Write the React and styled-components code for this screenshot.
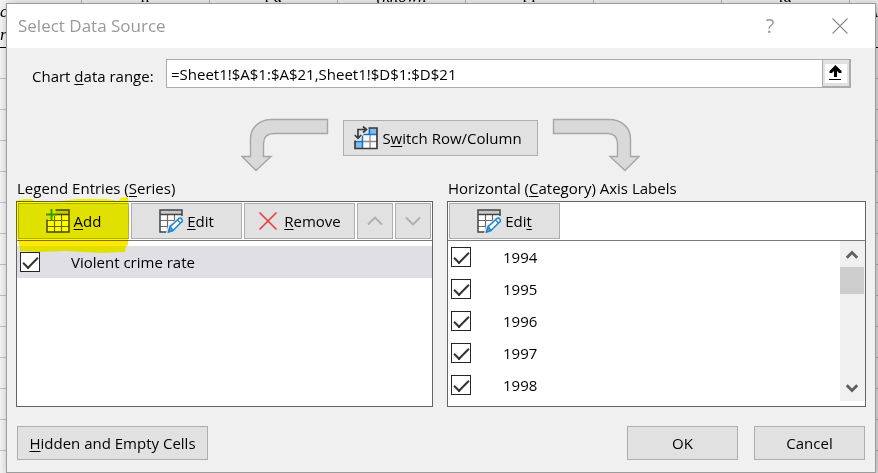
import React, { useState } from "react";
import styled, { createGlobalStyle } from "styled-components";

const GlobalStyle = createGlobalStyle`
  * { box-sizing: border-box; }
  body {
    margin: 0;
    background: #fff;
    color: #000;
    font-family: "Open Sans", "Noto Sans", sans-serif;
    font-size: 15px;
    line-height: 22px;
  }
  button, input { font: inherit; color: inherit; margin: 0; }
  u { text-underline-offset: 2px; text-decoration-thickness: 1px; }
`;

const Page = styled.div`
  position: relative;
  overflow: hidden;
  padding: 3px 2px 0 6px;
`;

/* Worksheet that shows round the edges of the dialog */
const Sheet = styled.div`
  position: absolute;
  inset: 0;
  overflow: hidden;
  background: repeating-linear-gradient(to bottom, transparent 0 30px, #c4c4c4 30px 31px) 0 48px no-repeat, #f7f7f7;
  font: italic 17px/24px "Liberation Serif", serif;
`;

const SheetHeader = styled.div`
  display: grid;
  grid-template-columns: 82px repeat(6, 128px) 29px;
  height: 48px;
  border-bottom: 1px solid #000;
  overflow: hidden;
`;

const SheetCell = styled.div`
  border-right: 1px solid #b9b9b9;
  text-align: ${(p) => p.$align || "center"};
  line-height: ${(p) => (p.$cut ? "24px" : "23px")};
  margin-top: ${(p) => (p.$cut ? "-15px" : "0")};
  white-space: pre-line;
`;

const Dialog = styled.section`
  position: relative;
  border: 1px solid #9c9c9c;
  background: #f0f0f0;
  box-shadow: 3px 2px 10px 2px rgba(0, 0, 0, 0.28);
`;

const TitleBar = styled.header`
  display: flex;
  align-items: center;
  height: 44px;
  padding: 0 18px 0 11px;
  background: #fff;
  color: #999;
`;

const Title = styled.h1`
  flex: 1;
  margin: 0;
  font-size: 17px;
  line-height: 24px;
  font-weight: 400;
`;

const TitleButton = styled.button`
  display: grid;
  place-items: center;
  width: 34px;
  height: 30px;
  margin-left: ${(p) => (p.$apart ? "36px" : "0")};
  padding: 0;
  border: 0;
  background: none;
  font-size: 20px;
`;

const Body = styled.div`
  padding: 11px 9px 12px;
`;

const RangeRow = styled.div`
  display: flex;
  align-items: center;
  padding: 0 15px 0 16px;
`;

const RangeLabel = styled.label`
  width: 134px;
  padding-top: 4px;
  white-space: nowrap;
`;

const RangeInput = styled.input`
  flex: 1;
  min-width: 0;
  height: 29px;
  padding: 0 4px;
  border: 1px solid #ababab;
  border-right: 0;
  border-radius: 0;
  background: #fff;
  outline: none;
`;

const CollapseButton = styled.button`
  display: grid;
  place-items: center;
  width: 29px;
  height: 29px;
  padding: 0;
  border: solid #ababab;
  border-width: 1px 2px 2px 1px;
  background: #e1e1e1;

  svg { background: #fff; }
`;

const SwitchRow = styled.div`
  display: flex;
  justify-content: center;
  align-items: flex-start;
  gap: 14px;
  margin-top: 30px;
  padding-right: 2px;
`;

const Button = styled.button`
  display: flex;
  align-items: center;
  justify-content: center;
  gap: 4px;
  width: ${(p) => p.$width}px;
  height: ${(p) => p.$height || 36}px;
  padding: 0;
  border: 1px solid #adadad;
  background: #e1e1e1;
  white-space: nowrap;
`;

const SwitchButton = styled(Button)`
  margin-top: 2px;
  padding-right: 4px;
`;

const Panels = styled.div`
  display: grid;
  grid-template-columns: 417fr 419fr;
  column-gap: 14px;
  margin-top: 5px;
`;

const Panel = styled.section`
  display: flex;
  flex-direction: column;
  min-width: 0;
`;

const PanelTitle = styled.h2`
  margin: 0 0 2px 1px;
  font-size: 15px;
  line-height: 22px;
  font-weight: 400;
  white-space: nowrap;
`;

const PanelBox = styled.div`
  flex: 1;
  border: 1px solid #646464;
  background: #fff;
`;

const Toolbar = styled.div`
  position: relative;
  display: flex;
  gap: 2px;
  padding: 1px;
  border-bottom: 1px solid #7a7a7a;
`;

const Marker = styled.svg`
  position: absolute;
  left: -1px;
  top: -8px;
  mix-blend-mode: multiply;
  pointer-events: none;
`;

const ListArea = styled.div`
  display: flex;
  padding: ${(p) => (p.$inset ? "5px 0 0" : "0 0 5px")};
`;

const List = styled.ul`
  flex: 1;
  margin: 0;
  padding: 0;
  list-style: none;
`;

const Item = styled.li`
  height: 32px;
  background: ${(p) => (p.$selected ? "#e0dfe4" : "transparent")};
`;

const ItemLabel = styled.label`
  display: flex;
  align-items: center;
  gap: ${(p) => p.$gap}px;
  height: 100%;
  padding-left: 3px;
`;

const CheckBox = styled.input`
  appearance: none;
  display: grid;
  justify-items: center;
  width: 20px;
  height: 20px;
  border: 1px solid #262626;
  background: #fff;

  &:checked::before {
    content: "";
    width: 13px;
    height: 6px;
    margin-top: 4px;
    border: solid #333;
    border-width: 0 0 2px 2px;
    transform: rotate(-45deg);
  }
`;

const ScrollBar = styled.div`
  display: flex;
  flex-direction: column;
  width: 25px;
  padding-right: 1px;
  background: #f0f0f0;
`;

const ScrollButton = styled.button`
  display: grid;
  place-items: center;
  height: 26px;
  padding: 0;
  border: 0;
  background: none;
`;

const ScrollTrack = styled.div`
  flex: 1;
`;

const ScrollThumb = styled.div`
  height: 27px;
  background: #cdcdcd;
`;

const Footer = styled.footer`
  display: flex;
  gap: 16px;
  margin-top: 19px;
  padding: 0 1px;
`;

const FooterStart = styled.div`
  flex: 1;
`;

const CurvedArrow = ({ flip }) => (
  <svg width="88" height="54" viewBox="0 0 88 54" aria-hidden="true">
    <path
      transform={flip ? "matrix(-1 0 0 1 88 0)" : undefined}
      d="M86.5 1.5H31C18 1.5 9.5 10 9.5 21V38.500H1L15 52.500 30 38.500H22.500V25Q23 15.500 33 15.500H86.500Z"
      fill="#d9d9d9"
      stroke="#a6a6a8"
      strokeWidth="1.400"
    />
  </svg>
);

const SwitchIcon = () => (
  <svg width="24" height="24" viewBox="0 0 24 24" fill="none" aria-hidden="true">
    <path d="M8 8H23V22H1V14H8Z" fill="#fff" />
    <path d="M15 2H23V8H14ZM1 15H8V22H1Z" fill="#83bbec" />
    <path d="M9 15.500H23M16 8V22" stroke="#8a8a8a" strokeWidth="1.300" />
    <path d="M8.500 22V8.500H23M1 15.500H8.500M15.500 2V8.500" stroke="#1473c4" strokeWidth="1.500" />
    <path d="M14.500 2H23V22.500H1V14.500" stroke="#3b3b3b" strokeWidth="1.700" />
    <path d="M0 0H13L14.500 3.500 9.500 8.500 5 14H0Z" fill="#e1e1e1" />
    <path d="M4 12V3.500H12M9 .5L12.500 3.500 9 6.500M.8 9L4 12.300 7.200 9" stroke="#3b3b3b" strokeWidth="1.700" />
  </svg>
);

const GridLines = () => (
  <>
    <rect x="1" y="1" width="22" height="22" fill="#fff" />
    <rect x="1" y="1" width="22" height="5" fill="#c8c8c8" />
    <path d="M1 11.500H23M1 17.500H23M8.500 6V23M15.500 6V23" stroke="#6a6a6a" strokeWidth="1.200" />
    <path d="M1 1H23V23H1ZM1 5.500H23" fill="none" stroke="#444" strokeWidth="1.500" />
  </>
);

const AddIcon = () => (
  <svg width="24" height="24" viewBox="0 0 24 24" aria-hidden="true">
    <GridLines />
    <path d="M0 0H9.500V4.500H11V7H7V10.500H0Z" fill="#e1e1e1" />
    <path d="M5.500 0V11M0 5.500H11" stroke="#2c9c3e" strokeWidth="1.800" />
  </svg>
);

const EditIcon = () => (
  <svg width="24" height="24" viewBox="0 0 24 24" aria-hidden="true">
    <GridLines />
    <path d="M24 7H21L9 17 7 24H24Z" fill="#e1e1e1" />
    <path d="M9.500 23L11.300 17.500 20 9.500Q22 8.500 23 10.500T22 13.500L14 21.500Z" fill="#fff" stroke="#1e88d0" strokeWidth="1.600" strokeLinejoin="round" />
    <path d="M9.500 23L11.300 17.500 14 21.500ZM18.500 11L21.500 14" fill="#4aa3df" stroke="#1e88d0" strokeWidth="1.300" />
  </svg>
);

const RemoveIcon = () => (
  <svg width="22" height="24" viewBox="0 0 22 24" aria-hidden="true">
    <path d="M1.500 3.500L18.500 20.500M18.500 3.500L1.500 20.500" stroke="#e8403f" strokeWidth="1.700" />
  </svg>
);

const Chevron = ({ down }) => (
  <svg width="16" height="10" viewBox="0 0 16 10" fill="none" aria-hidden="true">
    <path d={down ? "M1 1.500L8 8.500 15 1.500" : "M1 8.500L8 1.500 15 8.500"} stroke="#adadad" strokeWidth="1.800" />
  </svg>
);

const ScrollChevron = ({ down }) => (
  <svg width="12" height="9" viewBox="0 0 12 9" fill="none" aria-hidden="true">
    <path d={down ? "M.8 1.300L6 6.500 11.200 1.300" : "M.8 7.700L6 2.500 11.200 7.700"} stroke="#606060" strokeWidth="2.800" />
  </svg>
);

const CheckItem = ({ label, gap, selected }) => {
  const [checked, setChecked] = useState(true);
  return (
    <Item $selected={selected}>
      <ItemLabel $gap={gap}>
        <CheckBox type="checkbox" checked={checked} onChange={(e) => setChecked(e.target.checked)} />
        {label}
      </ItemLabel>
    </Item>
  );
};

const years = ["1994", "1995", "1996", "1997", "1998"];

export default function App() {
  const [range, setRange] = useState("=Sheet1!$A$1:$A$21,Sheet1!$D$1:$D$21");
  return (
    <Page>
      <GlobalStyle />
      <Sheet aria-hidden="true">
        <SheetHeader>
          <SheetCell $align="left">{"cr\nr"}</SheetCell>
          <SheetCell $cut>ll</SheetCell>
          <SheetCell $cut>l d</SheetCell>
          <SheetCell $cut>(known</SheetCell>
          <SheetCell $cut>l l</SheetCell>
          <SheetCell $cut />
          <SheetCell $cut>ld</SheetCell>
          <SheetCell $align="right">A</SheetCell>
        </SheetHeader>
      </Sheet>
      <Dialog role="dialog" aria-labelledby="dialog-title">
        <TitleBar>
          <Title id="dialog-title">Select Data Source</Title>
          <TitleButton type="button" aria-label="Help">?</TitleButton>
          <TitleButton type="button" aria-label="Close" $apart>
            <svg width="16" height="16" viewBox="0 0 16 16" aria-hidden="true">
              <path d="M.5.5L15.500 15.500M15.500.5L.5 15.500" stroke="#8c8c8c" strokeWidth="1.100" />
            </svg>
          </TitleButton>
        </TitleBar>
        <Body>
          <RangeRow>
            <RangeLabel htmlFor="range">Chart <u>d</u>ata range:</RangeLabel>
            <RangeInput id="range" value={range} spellCheck={false} onChange={(e) => setRange(e.target.value)} />
            <CollapseButton type="button" aria-label="Collapse dialog">
              <svg width="22" height="19" viewBox="0 0 22 19">
                <path d="M10.500 1L16.500 7V9H14L12 7V13H9V7L7 9H4.500V7Z" fill="#000" />
                <path d="M4 15.500H16" stroke="#000" />
              </svg>
            </CollapseButton>
          </RangeRow>

          <SwitchRow>
            <CurvedArrow />
            <SwitchButton type="button" $width={195}>
              <SwitchIcon />
              <span>S<u>w</u>itch Row/Column</span>
            </SwitchButton>
            <CurvedArrow flip />
          </SwitchRow>

          <Panels>
            <Panel>
              <PanelTitle>Legend Entries (<u>S</u>eries)</PanelTitle>
              <PanelBox>
                <Toolbar>
                  <Button type="button" $width={111}><AddIcon /><span><u>A</u>dd</span></Button>
                  <Button type="button" $width={111}><EditIcon /><span><u>E</u>dit</span></Button>
                  <Button type="button" $width={111}><RemoveIcon /><span><u>R</u>emove</span></Button>
                  <Button type="button" $width={36} aria-label="Move up"><Chevron /></Button>
                  <Button type="button" $width={36} aria-label="Move down"><Chevron down /></Button>
                  <Marker width="114" height="60" viewBox="0 0 114 60" aria-hidden="true">
                    <defs>
                      <linearGradient id="marker-ink" gradientUnits="userSpaceOnUse" x1="0" y1="0" x2="0" y2="60">
                        <stop offset="0.760" stopColor="#ffff00" />
                        <stop offset="0.760" stopColor="#ffe800" />
                        <stop offset="0.867" stopColor="#ffe800" />
                        <stop offset="0.867" stopColor="#ffff00" />
                      </linearGradient>
                    </defs>
                    <path
                      d="M0 7L8 5 16 5 18 7 38 8 60 5 90 5 103 7 104 4 112 3 113 24 112 51 110 52 109 58 84 59 50 57 22 58 4 57 3 50 1 42Z"
                      fill="url(#marker-ink)"
                    />
                  </Marker>
                </Toolbar>
                <ListArea $inset>
                  <List>
                    <CheckItem label="Violent crime rate" gap={31} selected />
                  </List>
                </ListArea>
              </PanelBox>
            </Panel>

            <Panel>
              <PanelTitle>Horizontal (<u>C</u>ategory) Axis Labels</PanelTitle>
              <PanelBox>
                <Toolbar>
                  <Button type="button" $width={111}><EditIcon /><span>Edi<u>t</u></span></Button>
                </Toolbar>
                <ListArea>
                  <List>
                    {years.map((y) => <CheckItem key={y} label={y} gap={32} />)}
                  </List>
                  <ScrollBar>
                    <ScrollButton type="button" aria-label="Scroll up"><ScrollChevron /></ScrollButton>
                    <ScrollTrack><ScrollThumb /></ScrollTrack>
                    <ScrollButton type="button" aria-label="Scroll down"><ScrollChevron down /></ScrollButton>
                  </ScrollBar>
                </ListArea>
              </PanelBox>
            </Panel>
          </Panels>

          <Footer>
            <FooterStart>
              <Button type="button" $width={191} $height={34}><span><u>H</u>idden and Empty Cells</span></Button>
            </FooterStart>
            <Button type="button" $width={111} $height={34}>OK</Button>
            <Button type="button" $width={111} $height={34}>Cancel</Button>
          </Footer>
        </Body>
      </Dialog>
    </Page>
  );
}
